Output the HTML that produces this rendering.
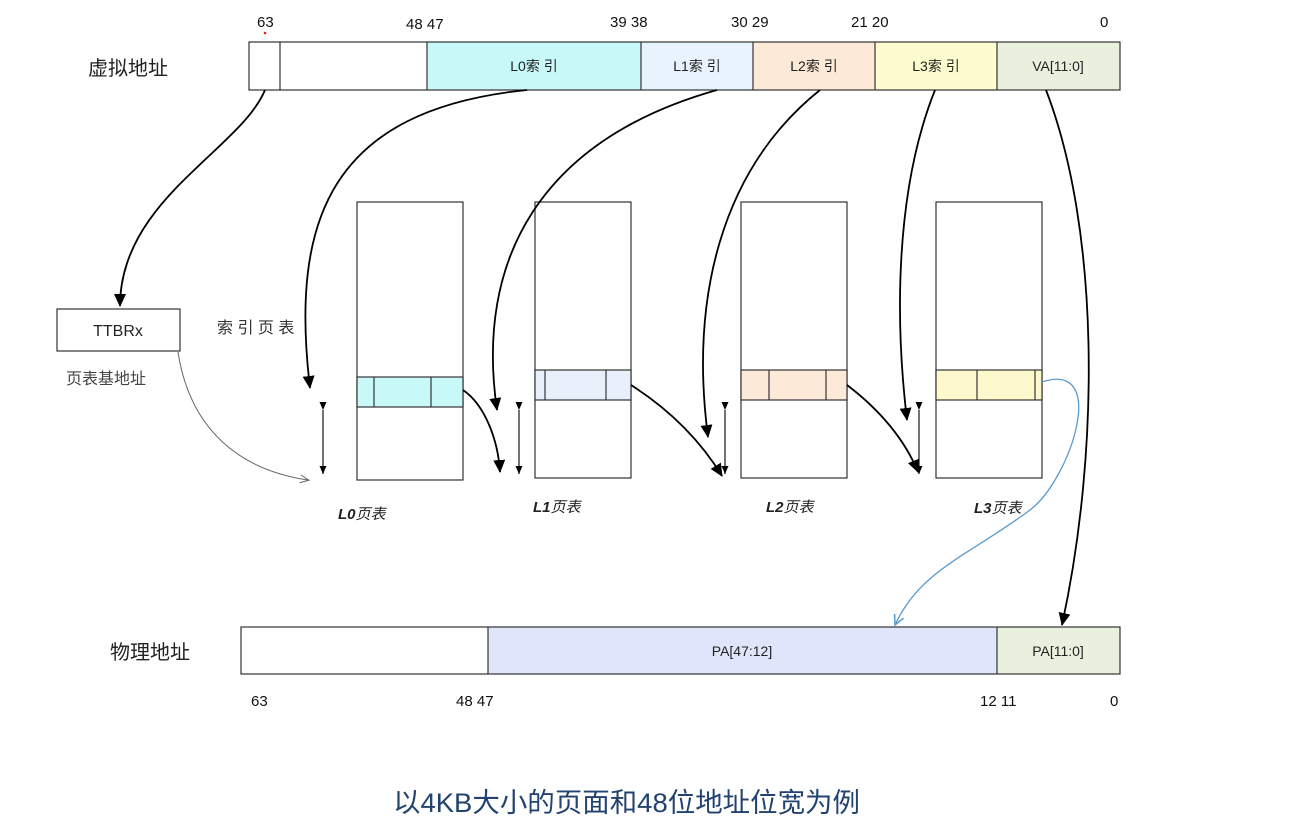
<!DOCTYPE html>
<html><head><meta charset="utf-8"><style>
html,body{margin:0;padding:0;background:#fff;width:1300px;height:833px;overflow:hidden}
svg{display:block}
text{font-family:"Liberation Sans","Noto Sans CJK SC",sans-serif}
</style></head><body>
<svg width="1300" height="833" viewBox="0 0 1300 833" xmlns="http://www.w3.org/2000/svg">
<defs>
<marker id="ab" markerWidth="14" markerHeight="14" refX="12" refY="7" orient="auto" markerUnits="userSpaceOnUse"><path d="M0,1 L13,7 L0,13 z" fill="#000"/></marker>
<marker id="as" markerWidth="9" markerHeight="9" refX="8" refY="4.5" orient="auto" markerUnits="userSpaceOnUse"><path d="M0,1 L8,4.5 L0,8 z" fill="#000"/></marker>
<marker id="ag" markerWidth="10" markerHeight="10" refX="8" refY="5" orient="auto" markerUnits="userSpaceOnUse"><path d="M0,1 L9,5 L0,9" fill="none" stroke="#666"/></marker>
<marker id="abl" markerWidth="12" markerHeight="12" refX="10" refY="6" orient="auto" markerUnits="userSpaceOnUse"><path d="M0,1 L10,6 L0,11" fill="none" stroke="#5a9bd0" stroke-width="1.5"/></marker>
</defs>

<text x="88" y="75" font-size="20" fill="#222">虚拟地址</text>
<g font-size="15" fill="#111">
<text x="257" y="27">63</text><text x="406" y="29">48 47</text>
<text x="610" y="27">39 38</text><text x="731" y="27">30 29</text>
<text x="851" y="27">21 20</text><text x="1100" y="27">0</text>
</g>
<circle cx="265" cy="33" r="1.3" fill="#d22"/>
<rect x="427" y="42" width="214" height="48" fill="#c8f8f8"/>
<rect x="641" y="42" width="112" height="48" fill="#e8f3fd"/>
<rect x="753" y="42" width="122" height="48" fill="#fde9d7"/>
<rect x="875" y="42" width="122" height="48" fill="#fdfcce"/>
<rect x="997" y="42" width="123" height="48" fill="#e9f1de"/>
<rect x="249" y="42" width="871" height="48" fill="none" stroke="#333" stroke-width="1.2"/>
<g stroke="#333" stroke-width="1.2">
<line x1="280" y1="42" x2="280" y2="90"/><line x1="427" y1="42" x2="427" y2="90"/>
<line x1="641" y1="42" x2="641" y2="90"/><line x1="753" y1="42" x2="753" y2="90"/>
<line x1="875" y1="42" x2="875" y2="90"/><line x1="997" y1="42" x2="997" y2="90"/>
</g>
<g font-size="14" fill="#222" text-anchor="middle">
<text x="534" y="71">L0索 引</text><text x="697" y="71">L1索 引</text>
<text x="814" y="71">L2索 引</text><text x="936" y="71">L3索 引</text>
<text x="1058" y="71">VA[11:0]</text>
</g>

<rect x="57" y="309" width="123" height="42" fill="#fff" stroke="#333" stroke-width="1.2"/>
<text x="118" y="336" font-size="16" text-anchor="middle" fill="#222">TTBRx</text>
<text x="66" y="384" font-size="16" fill="#444">页表基地址</text>
<text x="217" y="333" font-size="16" fill="#333">索 引 页 表</text>

<g stroke="#333" stroke-width="1.2">
<rect x="357" y="202" width="106" height="278" fill="#fff"/>
<rect x="357" y="377" width="106" height="30" fill="#c8f8f8"/>
<line x1="374" y1="377" x2="374" y2="407"/><line x1="431" y1="377" x2="431" y2="407"/>
<rect x="535" y="202" width="96" height="276" fill="#fff"/>
<rect x="535" y="370" width="96" height="30" fill="#e8f0fc"/>
<line x1="545" y1="370" x2="545" y2="400"/><line x1="606" y1="370" x2="606" y2="400"/>
<rect x="741" y="202" width="106" height="276" fill="#fff"/>
<rect x="741" y="370" width="106" height="30" fill="#fde9d7"/>
<line x1="769" y1="370" x2="769" y2="400"/><line x1="826" y1="370" x2="826" y2="400"/>
<rect x="936" y="202" width="106" height="276" fill="#fff"/>
<rect x="936" y="370" width="106" height="30" fill="#fdf9cc"/>
<line x1="977" y1="370" x2="977" y2="400"/><line x1="1035" y1="370" x2="1035" y2="400"/>
</g>
<g font-size="15" font-weight="bold" font-style="italic" fill="#222">
<text x="338" y="519">L0<tspan font-weight="normal">页表</tspan></text>
<text x="533" y="512">L1<tspan font-weight="normal">页表</tspan></text>
<text x="766" y="512">L2<tspan font-weight="normal">页表</tspan></text>
<text x="974" y="513">L3<tspan font-weight="normal">页表</tspan></text>
</g>

<g stroke="#444" stroke-width="1.5" marker-start="url(#as)" marker-end="url(#as)">
<line x1="323" y1="410" x2="323" y2="474"/>
<line x1="519" y1="410" x2="519" y2="474"/>
<line x1="725" y1="410" x2="725" y2="474"/>
<line x1="919" y1="410" x2="919" y2="474"/>
</g>

<g fill="none" stroke="#000" stroke-width="1.8" marker-end="url(#ab)">
<path d="M265,90 C240,150 120,200 120,306"/>
<path d="M527,90 C330,110 290,220 310,388"/>
<path d="M717,90 C540,140 475,260 497,410"/>
<path d="M820,90 C720,170 690,300 708,437"/>
<path d="M935,90 C895,190 895,320 907,420"/>
<path d="M1046,90 C1100,230 1100,450 1062,625"/>
<path d="M463,390 C485,405 498,440 500,472"/>
<path d="M631,385 C670,410 700,440 722,476"/>
<path d="M847,385 C880,410 905,440 918,472"/>
</g>
<path d="M178,352 C190,430 240,470 308,480" fill="none" stroke="#666" stroke-width="1" marker-end="url(#ag)"/>
<path d="M1042,382 C1110,360 1070,480 1030,510 C970,555 920,570 895,625" fill="none" stroke="#5a9bd0" stroke-width="1.3" marker-end="url(#abl)"/>

<text x="110" y="659" font-size="20" fill="#222">物理地址</text>
<rect x="488" y="627" width="509" height="47" fill="#dfe6fb"/>
<rect x="997" y="627" width="123" height="47" fill="#e9f1de"/>
<rect x="241" y="627" width="879" height="47" fill="none" stroke="#333" stroke-width="1.2"/>
<line x1="488" y1="627" x2="488" y2="674" stroke="#333" stroke-width="1.2"/>
<line x1="997" y1="627" x2="997" y2="674" stroke="#333" stroke-width="1.2"/>
<text x="742" y="656" font-size="14" text-anchor="middle" fill="#222">PA[47:12]</text>
<text x="1058" y="656" font-size="14" text-anchor="middle" fill="#222">PA[11:0]</text>
<g font-size="15" fill="#111">
<text x="251" y="706">63</text><text x="456" y="706">48 47</text>
<text x="980" y="706">12 11</text><text x="1110" y="706">0</text>
</g>

<text x="393" y="812" font-size="27" textLength="467" lengthAdjust="spacingAndGlyphs" fill="#22426f">以4KB大小的页面和48位地址位宽为例</text>
</svg>
</body></html>
